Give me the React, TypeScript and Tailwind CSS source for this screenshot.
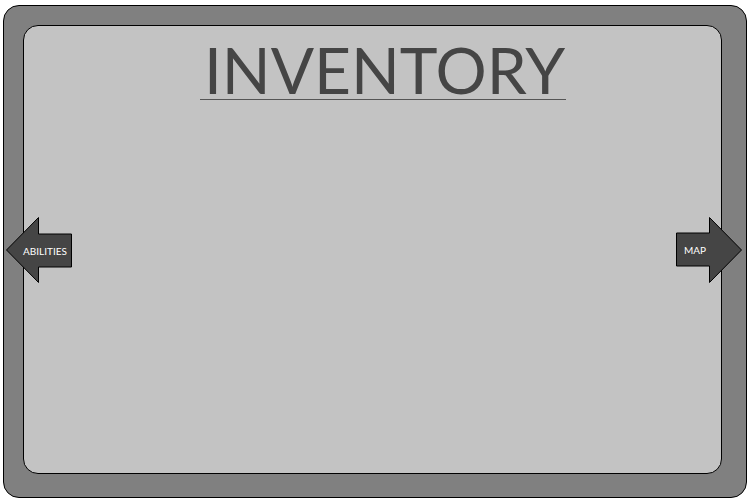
export default function App() {
  return (
    <div className="relative w-[750px] h-[500px] bg-white overflow-hidden" style={{ fontFamily: 'Lato, "Open Sans", sans-serif' }}>
      <div className="ml-[3px] mt-[5px] w-[744px] h-[493px] rounded-[16px] border border-black bg-[#808080] pt-[19px] pl-[19px] pr-[24px] pb-[23px] flex">
        <div className="flex-1 rounded-[15px] border border-black bg-[#c3c3c3] flex flex-col">
          <div className="ml-[176px] mt-[15px] w-[366px] border-b border-[#555] flex justify-center">
            <h1 className="text-[64px] leading-[58px] text-[#454545] pl-[3px]">INVENTORY</h1>
          </div>
        </div>
      </div>

      <NavArrow dir="left" label="ABILITIES" className="left-[6px] top-[217px]" />
      <NavArrow dir="right" label="MAP" className="left-[676px] top-[217px]" />
    </div>
  );
}

interface NavArrowProps {
  dir: 'left' | 'right';
  label: string;
  className: string;
}

function NavArrow({ dir, label, className }: NavArrowProps) {
  const points =
    dir === 'left'
      ? '0.5,33 32.5,0.5 32.5,17 65.5,17 65.5,50 32.5,50 32.5,65.5'
      : '0.5,16 33.5,16 33.5,0.5 65.5,33 33.5,65.5 33.5,49 0.5,49';
  return (
    <div className={`absolute w-[66px] h-[66px] ${className}`}>
      <svg width="66" height="66" className="absolute inset-0">
        <polygon points={points} fill="#454545" stroke="#000" strokeWidth="1" />
      </svg>
      <span
        className={`absolute text-[10px] text-white ${dir === 'left' ? 'left-[17px] top-[27px]' : 'left-[8px] top-[26px]'}`}
      >
        {label}
      </span>
    </div>
  );
}
